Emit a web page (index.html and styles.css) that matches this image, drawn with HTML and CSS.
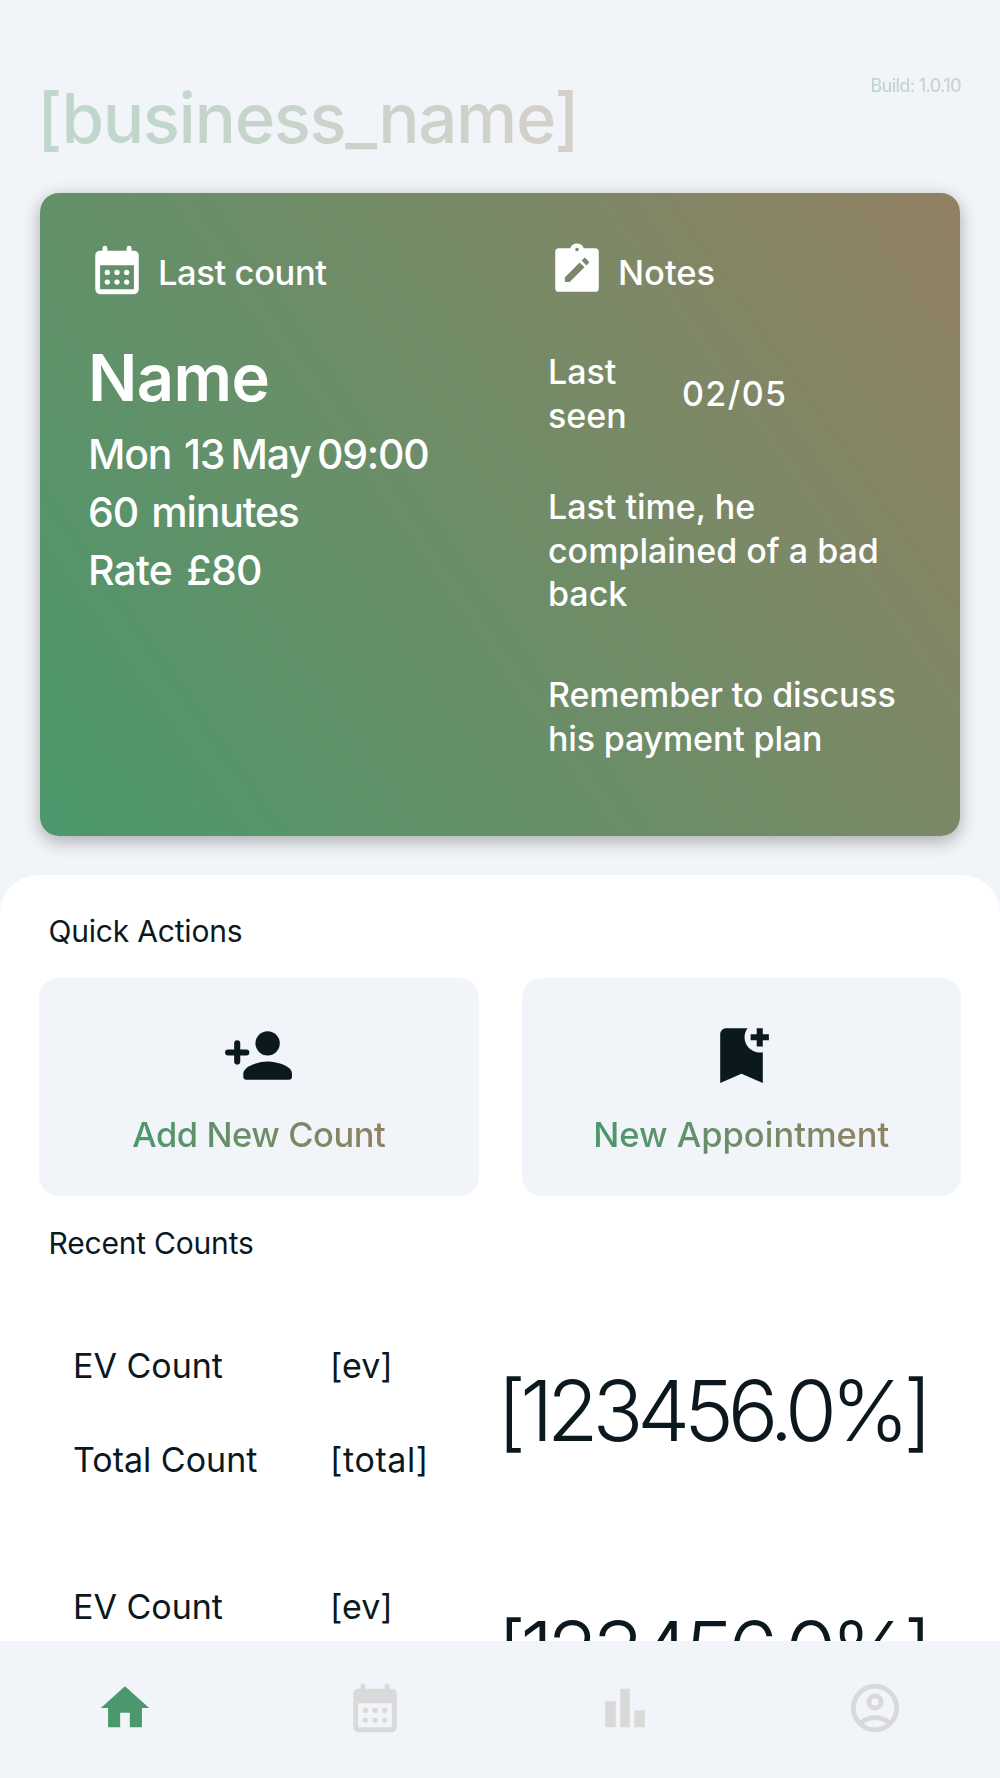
FILE: index.html
```
<!DOCTYPE html>
<html lang="en">
<head>
<meta charset="utf-8">
<title>Dashboard</title>
<link rel="stylesheet" href="styles.css">
</head>
<body>
<main class="screen">
  <header class="header">
    <h1 class="business">[business_name]</h1>
    <span class="build">Build: 1.0.10</span>
  </header>

  <section class="card">
    <div class="card-col">
      <div class="card-head">
        <svg class="icon" viewBox="0 0 24 24" fill="currentColor"><path fill-rule="evenodd" d="M6 4V3a1 1 0 0 1 2 0v1h8V3a1 1 0 0 1 2 0v1h1a2 2 0 0 1 2 2v14a2 2 0 0 1-2 2H5a2 2 0 0 1-2-2V6a2 2 0 0 1 2-2zM5 10v10h14V10z"/><circle cx="8" cy="13" r="1.1"/><circle cx="12" cy="13" r="1.1"/><circle cx="16" cy="13" r="1.1"/><circle cx="8" cy="17" r="1.1"/><circle cx="12" cy="17" r="1.1"/><circle cx="16" cy="17" r="1.1"/></svg>
        <span class="label label-count">Last count</span>
      </div>
      <h2 class="name">Name</h2>
      <p class="line line-date">Mon&nbsp; 13 May 09:00</p>
      <p class="line line-length">60&nbsp; minutes</p>
      <p class="line line-rate">Rate&nbsp; £80</p>
    </div>
    <div class="card-col">
      <div class="card-head">
        <svg class="icon" viewBox="0 0 24 24" fill="currentColor"><path fill-rule="evenodd" d="M4.500 3h4.700a3 3 0 0 1 5.600 0h4.700A1.500 1.500 0 0 1 21 4.500v15a1.500 1.500 0 0 1-1.500 1.500h-15A1.500 1.500 0 0 1 3 19.500v-15A1.500 1.500 0 0 1 4.500 3zm7.500-.250a.75.75 0 1 0 0 1.500.75.75 0 0 0 0-1.500zM7 17h2l6.100-6.100-2-2L7 15zM13.900 8.100l2 2 .95-.95a.5.5 0 0 0 0-.7L15.550 7.150a.5.5 0 0 0-.7 0z"/></svg>
        <span class="label">Notes</span>
      </div>
      <div class="seen">
        <p class="note">Last<br>seen</p>
        <p class="note date">02/05</p>
      </div>
      <p class="note">Last time, he<br>complained of a bad<br>back</p>
      <p class="note reminder">Remember to discuss<br>his payment plan</p>
    </div>
  </section>

  <section class="sheet">
    <h3 class="title">Quick Actions</h3>
    <div class="actions">
      <div class="tile">
        <svg class="tile-icon" viewBox="0 0 24 24" fill="currentColor"><circle cx="15" cy="8" r="4"/><path d="M15 14c-2.670 0-8 1.340-8 4v1a1 1 0 0 0 1 1h14a1 1 0 0 0 1-1v-1c0-2.660-5.330-4-8-4z"/><path d="M6 10V8a1 1 0 0 0-2 0v2H2a1 1 0 0 0 0 2h2v2a1 1 0 0 0 2 0v-2h2a1 1 0 0 0 0-2z"/></svg>
        <span class="tile-label label-add">Add New Count</span>
      </div>
      <div class="tile">
        <svg class="tile-icon" viewBox="0 0 24 24" fill="currentColor"><path d="M21 7h-2v2h-2V7h-2V5h2V3h2v2h2zM19 21l-7-3-7 3V5c0-1.100.9-2 2-2h7c-.630.840-1 1.870-1 3 0 2.760 2.240 5 5 5 .340 0 .680-.030 1-.1z"/></svg>
        <span class="tile-label">New Appointment</span>
      </div>
    </div>
    <h3 class="title">Recent Counts</h3>
    <div class="counts">
      <div class="row">
        <div class="pairs">
          <span>EV Count</span><span>[ev]</span>
          <span>Total Count</span><span class="total">[total]</span>
        </div>
        <div class="percent">[123456.0%]</div>
      </div>
      <div class="row">
        <div class="pairs">
          <span>EV Count</span><span>[ev]</span>
          <span>Total Count</span><span class="total">[total]</span>
        </div>
        <div class="percent">[123456.0%]</div>
      </div>
    </div>
  </section>

  <nav class="nav">
    <svg class="icon active" viewBox="0 0 24 24" fill="currentColor"><path d="M10 20v-6h4v6h5v-8h3L12 3 2 12h3v8z"/></svg>
    <svg class="icon" viewBox="0 0 24 24" fill="currentColor"><path fill-rule="evenodd" d="M6 4V3a1 1 0 0 1 2 0v1h8V3a1 1 0 0 1 2 0v1h1a2 2 0 0 1 2 2v14a2 2 0 0 1-2 2H5a2 2 0 0 1-2-2V6a2 2 0 0 1 2-2zM5 10v10h14V10z"/><circle cx="8" cy="13" r="1.1"/><circle cx="12" cy="13" r="1.1"/><circle cx="16" cy="13" r="1.1"/><circle cx="8" cy="17" r="1.1"/><circle cx="12" cy="17" r="1.1"/><circle cx="16" cy="17" r="1.1"/></svg>
    <svg class="icon" viewBox="0 0 24 24" fill="currentColor"><path d="M3.800 9.200h4.400V20H3.800zM10 4h4v16h-4zM15.900 13h4.300v7h-4.300z"/></svg>
    <svg class="icon" viewBox="0 0 24 24" fill="currentColor"><path fill-rule="evenodd" d="M12 2a10 10 0 1 0 0 20 10 10 0 0 0 0-20zM7.350 18.500C8.660 17.560 10.260 17 12 17s3.340.560 4.650 1.500C15.340 19.440 13.740 20 12 20s-3.340-.560-4.650-1.500zm10.790-1.380C16.450 15.800 14.320 15 12 15s-4.450.800-6.140 2.120A8 8 0 1 1 18.140 17.120zM12 6a3.500 3.500 0 1 0 0 7 3.500 3.500 0 0 0 0-7zm0 5a1.500 1.500 0 1 1 0-3 1.500 1.500 0 0 1 0 3z"/></svg>
  </nav>
</main>
</body>
</html>
```

FILE: styles.css
```
* { box-sizing: border-box; margin: 0; padding: 0; }

body {
  font-family: Inter, "Open Sans", sans-serif;
  background: #f1f4f8;
  color: #0b191e;
}

.screen {
  display: flex;
  flex-direction: column;
  width: 1000px;
  height: 1778px;
  overflow: hidden;
}

.header {
  display: flex;
  justify-content: space-between;
  align-items: flex-start;
  height: 193px;
  padding: 74px 39px 0 37px;
}

.business, .build, .tile-label {
  background: linear-gradient(90deg, #4b986c, #928163);
  -webkit-background-clip: text;
  background-clip: text;
  color: transparent;
}

.business { font-size: 69px; line-height: 88px; font-weight: 500; letter-spacing: -1.4px; opacity: .3; }
.build {
  font-size: 18px;
  line-height: 24px;
  font-weight: 500;
  letter-spacing: -.7px;
  opacity: .3;
  background-image: linear-gradient(90deg, #4b986c, #7f8765);
}

.card {
  display: grid;
  grid-template-columns: 460px 1fr;
  flex: none;
  width: 920px;
  height: 643px;
  margin: 0 40px;
  padding: 48px 48px 0;
  border-radius: 19px;
  background: linear-gradient(55deg, #4b986c, #928163);
  box-shadow: 0 5px 18px rgba(0, 0, 0, .3);
  color: #fff;
}

.card-head { display: flex; gap: 12px; height: 58px; }
.icon { display: block; width: 58px; height: 58px; }
.label { font-size: 34.5px; line-height: 58px; font-weight: 500; padding-top: 3px; }
.label-count { letter-spacing: -.4px; }
.name { font-size: 65px; line-height: 78px; font-weight: 600; letter-spacing: -.6px; margin: 40px 0 7.5px; }
.line { font-size: 41px; line-height: 58px; font-weight: 500; }
.line-date { letter-spacing: -1.2px; word-spacing: -3.4px; }
.line-length { letter-spacing: -1.2px; word-spacing: -3px; }
.line-rate { letter-spacing: -.8px; word-spacing: -3px; }
.note { font-size: 34px; line-height: 43.6px; font-weight: 500; white-space: nowrap; }
.date { letter-spacing: 1.4px; }
.seen { display: grid; grid-template-columns: 134px 1fr; align-items: center; margin: 51px 0 48px; }
.reminder { margin-top: 57.5px; letter-spacing: -.15px; }

.sheet {
  flex: 1;
  min-height: 0;
  margin-top: 38.5px;
  padding: 37px 39px 0;
  border-radius: 38px 38px 0 0;
  background: #fff;
  overflow: hidden;
}
.title { font-size: 30px; line-height: 38px; font-weight: 400; letter-spacing: -.2px; padding-left: 9.5px; }
.actions { display: grid; grid-template-columns: 1fr 1fr; gap: 43px; margin: 28px 0 28.5px; }
.tile {
  display: flex;
  flex-direction: column;
  align-items: center;
  gap: 21.5px;
  height: 218px;
  padding-top: 41px;
  border-radius: 20px;
  background: #f1f4f8;
}
.tile-icon { width: 73px; height: 73px; }
.tile-label { font-size: 34.5px; line-height: 44px; font-weight: 500; }
.label-add { letter-spacing: -.45px; }

.counts { margin-top: 30px; }
.row { display: grid; grid-template-columns: 424px 1fr; align-items: center; height: 241.5px; padding-left: 34px; }
.pairs { display: grid; grid-template-columns: 257px 1fr; row-gap: 50.5px; font-size: 34px; line-height: 44px; }
.total { letter-spacing: .6px; }
.percent {
  font-size: 84px;
  line-height: 100px;
  font-weight: 300;
  letter-spacing: -6.1px;
  padding-bottom: 4px;
  white-space: nowrap;
}

.nav {
  display: flex;
  align-items: center;
  justify-content: space-around;
  flex: none;
  height: 137px;
  padding-bottom: 4px;
  background: #f1f4f8;
  color: #d9d9d9;
}
.active { color: #4b986c; }
```
